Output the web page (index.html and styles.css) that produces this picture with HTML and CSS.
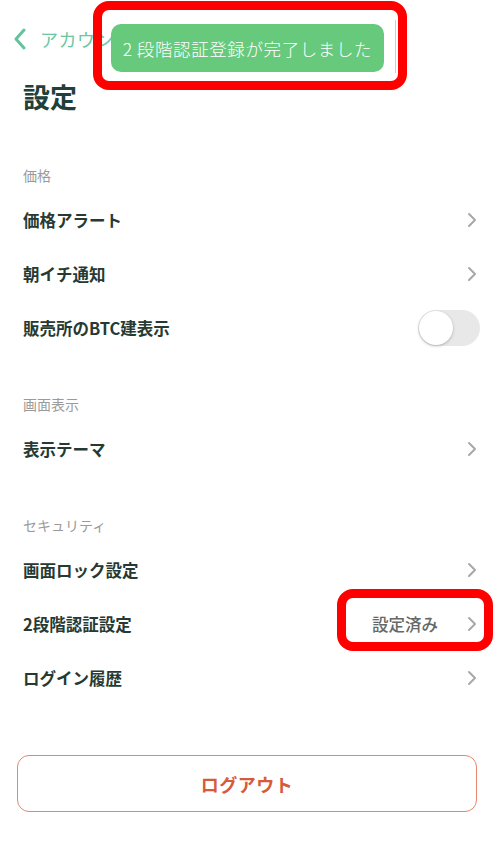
FILE: index.html
```html
<!DOCTYPE html>
<html lang="ja">
  <head>
    <meta charset="UTF-8" />
    <meta name="viewport" content="width=device-width, initial-scale=1.0" />
    <title>設定</title>
    <link rel="stylesheet" href="styles.css">
  </head>
  <body>
    <div class="page">
      <div class="topbar">
        <svg class="backIcon" width="14" height="22" viewBox="0 0 14 22">
          <polyline points="11,2 3,11 11,20" fill="none" stroke="#62c49c" stroke-width="3" stroke-linecap="round" stroke-linejoin="round" />
        </svg>
        <span class="backLabel">アカウント</span>
      </div>
      <h1 class="title">設定</h1>

      <div class="section">
        <div class="sectionLabel">価格</div>
        <div class="row">
          <span class="rowLabel">価格アラート</span>
          <svg class="chevron" width="10" height="16" viewBox="0 0 10 16"><polyline points="2,2 8,8 2,14" /></svg>
        </div>
        <div class="row">
          <span class="rowLabel">朝イチ通知</span>
          <svg class="chevron" width="10" height="16" viewBox="0 0 10 16"><polyline points="2,2 8,8 2,14" /></svg>
        </div>
        <div class="row">
          <span class="rowLabel">販売所のBTC建表示</span>
          <div class="toggle"><div class="knob"></div></div>
        </div>
      </div>

      <div class="section">
        <div class="sectionLabel">画面表示</div>
        <div class="row">
          <span class="rowLabel">表示テーマ</span>
          <svg class="chevron" width="10" height="16" viewBox="0 0 10 16"><polyline points="2,2 8,8 2,14" /></svg>
        </div>
      </div>

      <div class="section">
        <div class="sectionLabel">セキュリティ</div>
        <div class="row">
          <span class="rowLabel">画面ロック設定</span>
          <svg class="chevron" width="10" height="16" viewBox="0 0 10 16"><polyline points="2,2 8,8 2,14" /></svg>
        </div>
        <div class="row">
          <span class="rowLabel">2段階認証設定</span>
          <span class="rowRight">
            <span class="rowValue">設定済み</span>
            <svg class="chevron" width="10" height="16" viewBox="0 0 10 16"><polyline points="2,2 8,8 2,14" /></svg>
          </span>
        </div>
        <div class="row">
          <span class="rowLabel">ログイン履歴</span>
          <svg class="chevron" width="10" height="16" viewBox="0 0 10 16"><polyline points="2,2 8,8 2,14" /></svg>
        </div>
      </div>

      <div class="logoutWrap">
        <button class="logoutBtn">ログアウト</button>
      </div>
    </div>

    <!-- toast + annotation frames sit over the page -->
    <div class="toast"><span class="toastNum">2</span>段階認証登録が完了しました</div>
    <div class="mark markTop"></div>
    <div class="mark markStatus"></div>
  </body>
</html>
```

FILE: styles.css
```css
body {
  margin: 0;
  background: #ffffff;
  font-family: "Noto Sans CJK JP", "Noto Sans", sans-serif;
  color: #243c35;
}
.page {
  width: 498px;
  padding: 0 18px 0 23px;
  box-sizing: border-box;
}
.topbar {
  height: 77px;
  display: flex;
  align-items: center;
  margin-left: -10px;
  gap: 13px;
}
.backIcon {
  display: block;
}
.backLabel {
  font-size: 18px;
  color: #6cc7a0;
  letter-spacing: 0.5px;
}
.title {
  margin: 0 0 9px 0;
  height: 40px;
  line-height: 40px;
  font-size: 27px;
  font-weight: 700;
  color: #22403a;
}
.section {
  padding-top: 39px;
}
.sectionLabel {
  height: 20px;
  line-height: 20px;
  font-size: 14px;
  color: #9a9a9a;
  margin-bottom: 8px;
}
.row {
  height: 54px;
  display: flex;
  align-items: center;
  justify-content: space-between;
}
.rowLabel {
  font-size: 16.5px;
  font-weight: 700;
  color: #263a33;
}
.rowRight {
  display: flex;
  align-items: center;
  gap: 29px;
}
.rowValue {
  font-size: 16.5px;
  font-weight: 500;
  color: #646866;
}
.chevron {
  display: block;
  margin-right: 3px;
}
.chevron polyline {
  fill: none;
  stroke: #a8a8a8;
  stroke-width: 2;
  stroke-linecap: round;
  stroke-linejoin: round;
}
.toggle {
  width: 62px;
  height: 36px;
  border-radius: 18px;
  background: #e8e8e8;
  padding: 1px;
  box-sizing: border-box;
}
.knob {
  width: 34px;
  height: 34px;
  border-radius: 50%;
  background: #ffffff;
  box-shadow: 0 1px 3px rgba(0, 0, 0, 0.25);
}
.logoutWrap {
  padding: 50px 3px 0 0;
  margin-left: -6px;
}
.logoutBtn {
  width: 100%;
  height: 57px;
  border: 1.5px solid #e9846d;
  border-radius: 12px;
  background: #ffffff;
  font-family: "Noto Sans CJK JP", sans-serif;
  font-size: 18px;
  font-weight: 700;
  color: #d65a3b;
  letter-spacing: 0.5px;
}
.toast {
  position: absolute;
  left: 111px;
  top: 24px;
  width: 273px;
  height: 48px;
  border-radius: 10px;
  background: #67c97c;
  color: #ffffff;
  font-size: 17.5px;
  font-weight: 300;
  letter-spacing: 0.6px;
  display: flex;
  align-items: center;
  justify-content: center;
}
.toastNum {
  margin-right: 4px;
}
.mark {
  position: absolute;
  border: 9px solid #ff0000;
  border-radius: 16px;
}
.markTop {
  left: 93px;
  top: 1px;
  width: 296px;
  height: 71px;
}
.markTop::after {
  content: "";
  position: absolute;
  right: 2px;
  top: 10px;
  bottom: 8px;
  width: 1px;
  background: #cfcfcf;
}
.markStatus {
  left: 337px;
  top: 589px;
  width: 138px;
  height: 44px;
}
```
